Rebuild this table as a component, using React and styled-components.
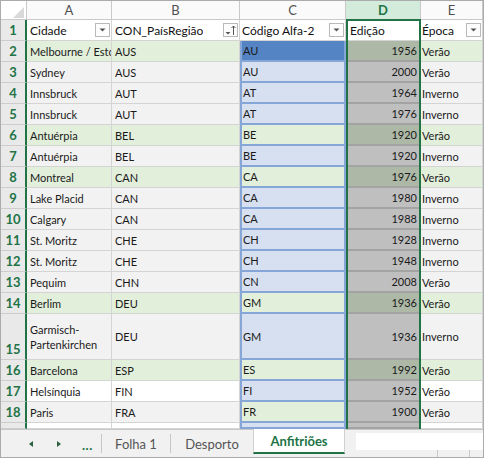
import React from 'react';
import styled, { createGlobalStyle, css } from 'styled-components';

const GREEN = '#217346';
const GRID = '#d4d4d4';
const ROW_BG = { green: '#e2efda', gray: '#f2f2f2', white: '#ffffff' };
const CODE_BG = { blue: '#d6e0f1', green: '#e2efda', active: '#5584c4' };
const NUM_BG = { green: '#adb9a6', gray: '#bfbfbf', white: '#bfbfbf' };

const Global = createGlobalStyle`
  html, body { margin: 0; padding: 0; background: #fff; }
  body { font-family: Lato, "Liberation Sans", sans-serif; }
`;

const Frame = styled.div`
  width: 484px;
  height: 458px;
  box-sizing: border-box;
  border: 1px solid #ababab;
  display: flex;
  flex-direction: column;
  overflow: hidden;
  background: #fff;
`;

const Sheet = styled.div`
  position: relative;
  flex: none;
  height: 428px;
  display: grid;
  grid-template-columns: 26px 85px 128px 106px 75px 62px;
  grid-template-rows: 19px repeat(14, 21px) 46px 21px 21px 21px 6px;
  overflow: hidden;
`;

const cellBase = css`
  box-sizing: border-box;
  border-right: 1px solid ${GRID};
  border-bottom: 1px solid ${GRID};
  min-width: 0;
  overflow: hidden;
  white-space: nowrap;
  display: flex;
  align-items: center;
`;

const Corner = styled.div`
  ${cellBase};
  position: relative;
  background: #fff;
  border-color: #c9c9c9;
  &::after {
    content: '';
    position: absolute;
    right: 2px;
    bottom: 1px;
    width: 11px;
    height: 11px;
    background: #d9d9d9;
    clip-path: polygon(100% 0, 100% 100%, 0 100%);
  }
`;

const ColHead = styled.div`
  ${cellBase};
  justify-content: center;
  background: ${(p) => (p.$active ? '#d3ebdb' : '#fafafa')};
  border-color: #c9c9c9;
  color: ${(p) => (p.$active ? GREEN : '#505050')};
  font-weight: ${(p) => (p.$active ? 700 : 400)};
  font-size: 13px;
`;

const RowHead = styled.div`
  ${cellBase};
  justify-content: center;
  align-items: ${(p) => (p.$bottom ? 'flex-end' : 'center')};
  padding-bottom: ${(p) => (p.$bottom ? '2px' : '0')};
  background: #e9e9e9;
  border-right: 2px solid ${GREEN};
  border-bottom-color: #cdcdcd;
  color: ${GREEN};
  font-weight: 700;
  font-size: 13px;
`;

const HeadCell = styled.div`
  ${cellBase};
  justify-content: space-between;
  padding-left: ${(p) => p.$pad || 3}px;
  background: #fff;
  color: #111;
  font-size: 12px;
`;

const HeadLabel = styled.span`
  overflow: hidden;
`;

const FilterBtn = styled.span`
  flex: none;
  width: 15px;
  height: 14px;
  margin-right: 1px;
  box-sizing: border-box;
  border: 1px solid #b9b9b9;
  background: #fdfdfd;
  display: flex;
  align-items: center;
  justify-content: center;
`;

const DataCell = styled.div`
  ${cellBase};
  background: ${(p) => ROW_BG[p.$bg]};
  padding-left: ${(p) => p.$pad ?? 3}px;
  color: #1a1a1a;
  font-size: 11px;
  ${(p) =>
    p.$wrap &&
    css`
      white-space: normal;
      line-height: 15px;
    `}
`;

const CodeCell = styled.div`
  ${cellBase};
  background: ${(p) => CODE_BG[p.$tone]};
  border-left: 2px solid #86a6d8;
  border-right: 2px solid #86a6d8;
  border-bottom: 2px solid #86a6d8;
  padding-left: 1px;
  color: #1a1a1a;
  font-size: 11px;
`;

const NumCell = styled.div`
  ${cellBase};
  justify-content: flex-end;
  padding-right: 4px;
  background: ${(p) => NUM_BG[p.$bg]};
  border-right: none;
  border-bottom: 2px solid #a3a3a3;
  color: #1a1a1a;
  font-size: 11px;
`;

const SelectionFrame = styled.div`
  position: absolute;
  left: 345px;
  top: 18px;
  width: 75px;
  bottom: -2px;
  box-sizing: border-box;
  border: 2px solid ${GREEN};
  border-bottom: none;
  pointer-events: none;
`;

const TabBar = styled.div`
  flex: 1;
  display: flex;
  align-items: center;
  box-sizing: border-box;
  border-top: 1px solid #c8c8c8;
  background: #f1f1f1;
`;

const NavGroup = styled.div`
  width: 100px;
  height: 100%;
  display: flex;
  align-items: center;
  padding-left: 28px;
  box-sizing: border-box;
`;

const NavArrow = styled.span`
  width: 0;
  height: 0;
  border-top: 3px solid transparent;
  border-bottom: 3px solid transparent;
  ${(p) =>
    p.$dir === 'left'
      ? css`border-right: 4px solid #2b5f3f;`
      : css`border-left: 4px solid #2b5f3f;`}
  margin-right: ${(p) => p.$gap}px;
`;

const Ellipsis = styled.span`
  color: ${GREEN};
  font-weight: 700;
  font-size: 13px;
  letter-spacing: 0.5px;
  margin-top: 2px;
`;

const TabSep = styled.span`
  width: 1px;
  height: 19px;
  background: #c6c6c6;
  flex: none;
`;

const Tab = styled.div`
  width: ${(p) => p.$w}px;
  flex: none;
  text-align: center;
  color: #555;
  font-size: 13px;
`;

const ActiveTab = styled.div`
  align-self: flex-start;
  margin-top: -1px;
  width: 92px;
  height: 25px;
  flex: none;
  box-sizing: border-box;
  background: #fff;
  border-left: 1px solid #d0d0d0;
  border-right: 1px solid #d0d0d0;
  border-bottom: 2px solid ${GREEN};
  display: flex;
  align-items: center;
  justify-content: center;
  color: ${GREEN};
  font-weight: 700;
  font-size: 13px;
`;

const ScrollArea = styled.div`
  align-self: flex-start;
  margin-top: 3px;
  margin-left: 11px;
  flex: 1;
  display: flex;
  flex-direction: column;
`;

const ScrollTrack = styled.div`
  height: 17px;
  background: #fff;
`;

const TickRow = styled.div`
  height: 7px;
  display: flex;
  gap: 31px;
  padding-left: 81px;
`;

const Tick = styled.span`
  width: 1px;
  height: 100%;
  background: #c8c8c8;
`;

const FilterIcon = () => (
  <svg width="9" height="6" viewBox="0 0 9 6">
    <polygon points="1.5,1.5 7.5,1.5 4.5,4.5" fill="#555" />
  </svg>
);

const SortIcon = () => (
  <svg width="13" height="12" viewBox="0 0 13 12">
    <polygon points="1.5,8 6.5,8 4,10.5" fill="#555" />
    <line x1="9.5" y1="2" x2="9.5" y2="11" stroke="#555" strokeWidth="1" />
    <polyline points="7.5,4 9.5,2 11.5,4" fill="none" stroke="#555" strokeWidth="1" />
  </svg>
);

const rows = [
  { n: 2, a: 'Melbourne / Estocolmo', b: 'AUS', c: 'AU', d: 1956, e: 'Verão', bg: 'green', ct: 'active' },
  { n: 3, a: 'Sydney', b: 'AUS', c: 'AU', d: 2000, e: 'Verão', bg: 'gray', ct: 'blue' },
  { n: 4, a: 'Innsbruck', b: 'AUT', c: 'AT', d: 1964, e: 'Inverno', bg: 'gray', ct: 'blue' },
  { n: 5, a: 'Innsbruck', b: 'AUT', c: 'AT', d: 1976, e: 'Inverno', bg: 'gray', ct: 'blue' },
  { n: 6, a: 'Antuérpia', b: 'BEL', c: 'BE', d: 1920, e: 'Verão', bg: 'green', ct: 'green' },
  { n: 7, a: 'Antuérpia', b: 'BEL', c: 'BE', d: 1920, e: 'Inverno', bg: 'gray', ct: 'blue' },
  { n: 8, a: 'Montreal', b: 'CAN', c: 'CA', d: 1976, e: 'Verão', bg: 'green', ct: 'green' },
  { n: 9, a: 'Lake Placid', b: 'CAN', c: 'CA', d: 1980, e: 'Inverno', bg: 'gray', ct: 'blue' },
  { n: 10, a: 'Calgary', b: 'CAN', c: 'CA', d: 1988, e: 'Inverno', bg: 'gray', ct: 'blue' },
  { n: 11, a: 'St. Moritz', b: 'CHE', c: 'CH', d: 1928, e: 'Inverno', bg: 'gray', ct: 'blue' },
  { n: 12, a: 'St. Moritz', b: 'CHE', c: 'CH', d: 1948, e: 'Inverno', bg: 'gray', ct: 'blue' },
  { n: 13, a: 'Pequim', b: 'CHN', c: 'CN', d: 2008, e: 'Verão', bg: 'gray', ct: 'blue' },
  { n: 14, a: 'Berlim', b: 'DEU', c: 'GM', d: 1936, e: 'Verão', bg: 'green', ct: 'green' },
  { n: 15, a: 'Garmisch-Partenkirchen', b: 'DEU', c: 'GM', d: 1936, e: 'Inverno', bg: 'gray', ct: 'blue', tall: true },
  { n: 16, a: 'Barcelona', b: 'ESP', c: 'ES', d: 1992, e: 'Verão', bg: 'green', ct: 'green' },
  { n: 17, a: 'Helsínquia', b: 'FIN', c: 'FI', d: 1952, e: 'Verão', bg: 'white', ct: 'blue' },
  { n: 18, a: 'Paris', b: 'FRA', c: 'FR', d: 1900, e: 'Verão', bg: 'gray', ct: 'green' },
  { n: '', a: '', b: '', c: '', d: '', e: '', bg: 'white', ct: 'blue' },
];

export default function App() {
  return (
    <>
      <Global />
      <Frame>
        <Sheet>
          <Corner />
          <ColHead>A</ColHead>
          <ColHead>B</ColHead>
          <ColHead>C</ColHead>
          <ColHead $active>D</ColHead>
          <ColHead>E</ColHead>

          <RowHead>1</RowHead>
          <HeadCell>
            <HeadLabel>Cidade</HeadLabel>
            <FilterBtn><FilterIcon /></FilterBtn>
          </HeadCell>
          <HeadCell>
            <HeadLabel>CON_PaísRegião</HeadLabel>
            <FilterBtn><SortIcon /></FilterBtn>
          </HeadCell>
          <HeadCell $pad={2}>
            <HeadLabel>Código Alfa-2</HeadLabel>
            <FilterBtn><FilterIcon /></FilterBtn>
          </HeadCell>
          <HeadCell $pad={4}>
            <HeadLabel>Edição</HeadLabel>
          </HeadCell>
          <HeadCell $pad={1}>
            <HeadLabel>Época</HeadLabel>
            <FilterBtn><FilterIcon /></FilterBtn>
          </HeadCell>

          {rows.map((r, i) => (
            <React.Fragment key={i}>
              <RowHead $bottom={r.tall}>{r.n}</RowHead>
              <DataCell $bg={r.bg} $wrap={r.tall}>
                {r.tall ? (
                  <span>
                    Garmisch-
                    <br />
                    Partenkirchen
                  </span>
                ) : (
                  r.a
                )}
              </DataCell>
              <DataCell $bg={r.bg}>{r.b}</DataCell>
              <CodeCell $tone={r.ct}>{r.c}</CodeCell>
              <NumCell $bg={r.bg}>{r.d}</NumCell>
              <DataCell $bg={r.bg} $pad={1}>{r.e}</DataCell>
            </React.Fragment>
          ))}

          <SelectionFrame />
        </Sheet>

        <TabBar>
          <NavGroup>
            <NavArrow $dir="left" $gap={24} />
            <NavArrow $dir="right" $gap={21} />
            <Ellipsis>...</Ellipsis>
          </NavGroup>
          <TabSep />
          <Tab $w={68}>Folha 1</Tab>
          <TabSep />
          <Tab $w={82}>Desporto</Tab>
          <ActiveTab>Anfitriões</ActiveTab>
          <ScrollArea>
            <ScrollTrack />
            <TickRow>
              <Tick />
              <Tick />
            </TickRow>
          </ScrollArea>
        </TabBar>
      </Frame>
    </>
  );
}
